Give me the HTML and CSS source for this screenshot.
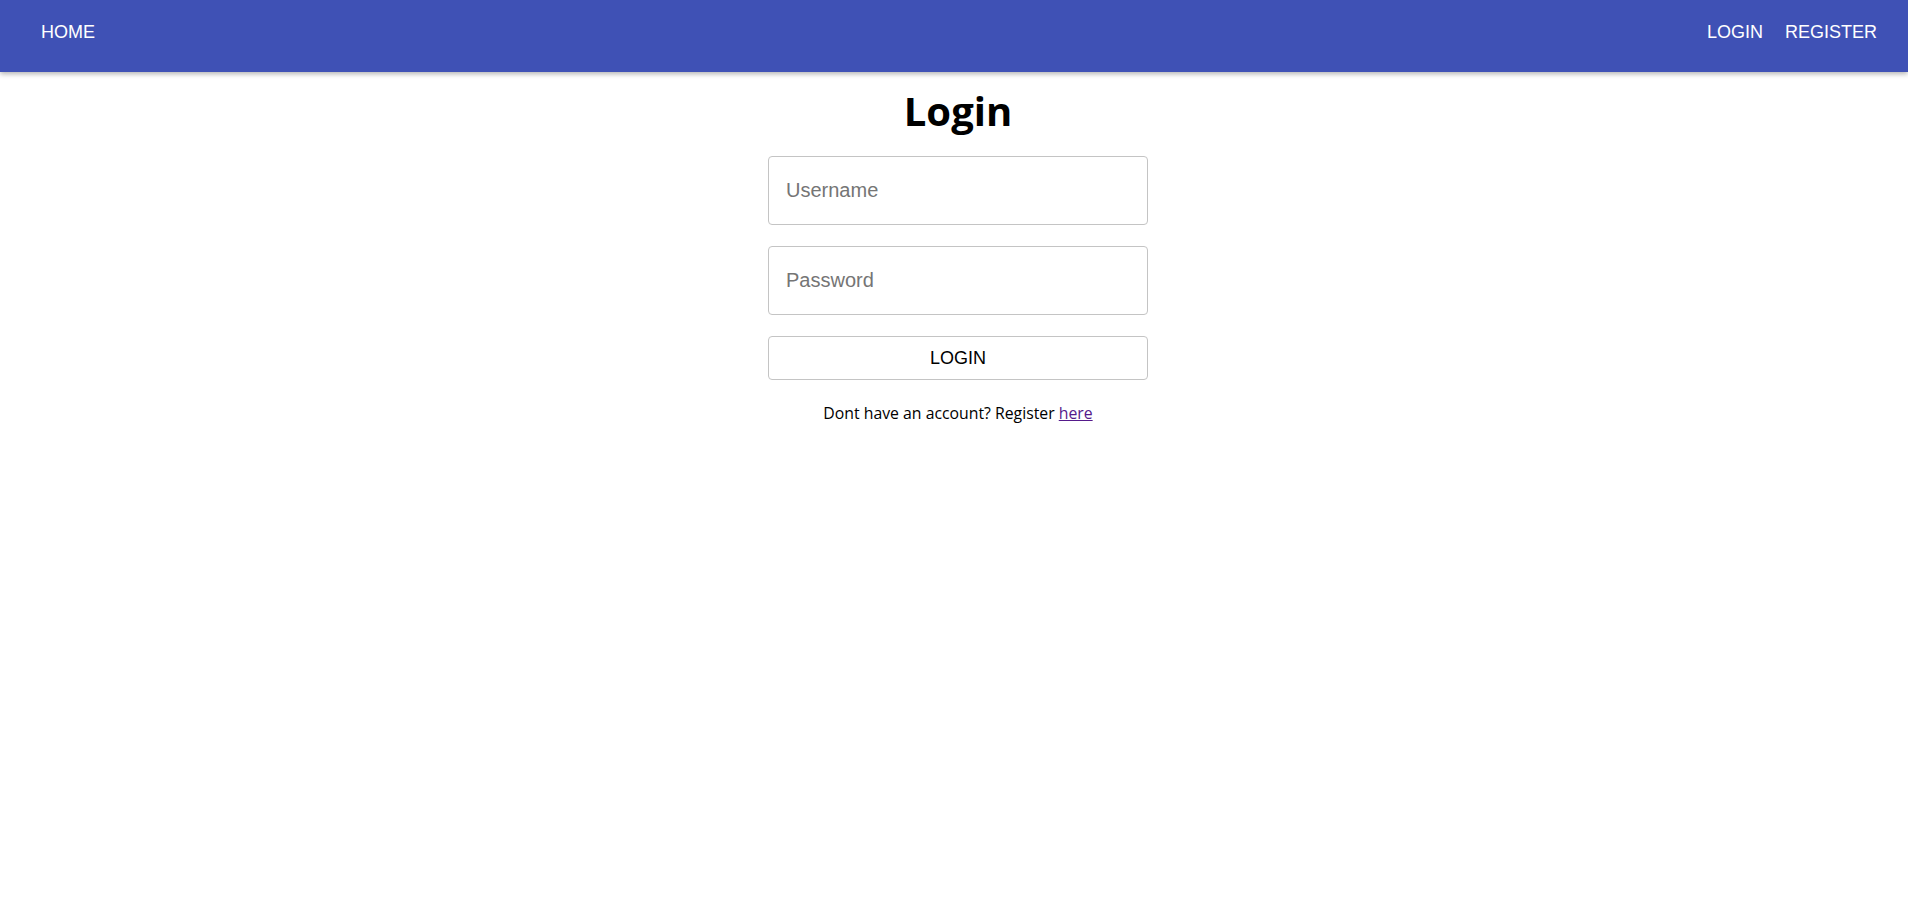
FILE: index.html
```html
<!DOCTYPE html>
<html lang="en">
<head>
  <meta charset="UTF-8">
  <meta name="viewport" content="width=device-width, initial-scale=1.0">
  <title>Login</title>
  <link rel="stylesheet" href="styles.css">
</head>
<body>
  <nav class="navbar">
    <a href="#" class="nav-link">HOME</a>
    <div class="nav-right">
      <a href="#" class="nav-link">LOGIN</a>
      <a href="#" class="nav-link">REGISTER</a>
    </div>
  </nav>

  <div class="container">
    <h1>Login</h1>
    <form class="login-form">
      <input type="text" placeholder="Username">
      <input type="password" placeholder="Password">
      <button type="submit" class="login-btn">LOGIN</button>
    </form>
    <p class="register-text">Dont have an account? Register <a href="#">here</a></p>
  </div>
</body>
</html>
```

FILE: styles.css
```css
/* Basic styling */
body {
  margin: 0;
  padding: 0;
  background-color: #ffffff;
  font-family: 'Open Sans', 'Liberation Sans', sans-serif;
}

.navbar {
  display: flex;
  justify-content: space-between;
  align-items: center;
  height: 72px;
  padding: 0 31px 7px 41px;
  box-sizing: border-box;
  background-color: #3f51b5;
  box-shadow: 0 2px 5px rgba(0, 0, 0, 0.3);
}

.nav-right {
  display: flex;
  gap: 22px;
}

.nav-link {
  color: #ffffff;
  text-decoration: none;
  font-family: 'Liberation Sans', Arial, sans-serif;
  font-size: 18px;
}

.container {
  display: flex;
  flex-direction: column;
  align-items: center;
  padding-left: 8px;
}

h1 {
  margin: 17px 0 23px;
  font-size: 40px;
  font-weight: bold;
  line-height: 1.1;
  color: #000;
}

.login-form {
  display: flex;
  flex-direction: column;
  gap: 21px;
  width: 380px;
}

.login-form input {
  height: 69px;
  padding: 0 17px;
  border: 1px solid #c4c4c4;
  border-radius: 4px;
  box-sizing: border-box;
  font-family: 'Liberation Sans', Arial, sans-serif;
  font-size: 20px;
}

.login-form input::placeholder {
  color: #757575;
}

.login-btn {
  height: 44px;
  background-color: #ffffff;
  border: 1px solid #c4c4c4;
  border-radius: 4px;
  font-family: 'Liberation Sans', Arial, sans-serif;
  font-size: 18px;
  color: #000;
  cursor: pointer;
}

.register-text {
  margin: 22px 0 0;
  font-size: 15.8px;
  color: #000;
}

.register-text a {
  color: #551a8b;
}
```
